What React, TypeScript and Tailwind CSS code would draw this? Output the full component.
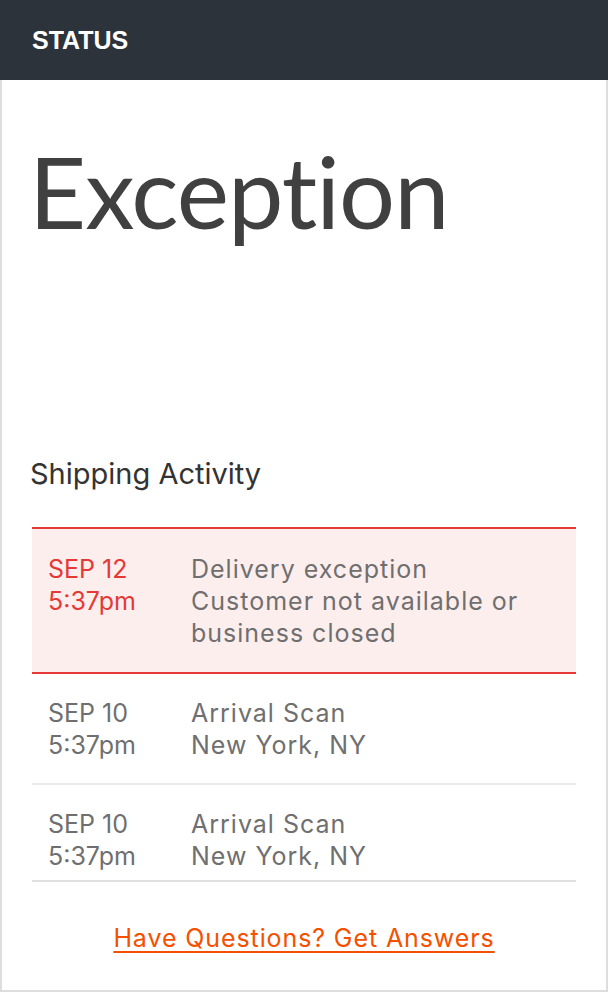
import React from "react";

const rows = [
  { date: "SEP 12", time: "5:37pm", lines: ["Delivery exception", "Customer not available or", "business closed"], alert: true },
  { date: "SEP 10", time: "5:37pm", lines: ["Arrival Scan", "New York, NY"], alert: false },
  { date: "SEP 10", time: "5:37pm", lines: ["Arrival Scan", "New York, NY"], alert: false, last: true },
];

export default function App() {
  return (
    <div className="w-[608px] h-[992px] bg-white flex flex-col" style={{ fontFamily: "Inter, 'Open Sans', sans-serif" }}>
      <div className="h-[80px] bg-[#2c333b] flex items-center px-[32px] shrink-0">
        <span className="text-white font-bold text-[25px] leading-none" style={{ fontFamily: "'Liberation Sans', Arial, sans-serif" }}>STATUS</span>
      </div>
      <div className="flex-1 border-x-2 border-b-2 border-[#dddddd] flex flex-col px-[30px]">
        <h1 className="mt-[46px] -ml-[3px] text-[99px] leading-[130px] text-[#404040] font-normal tracking-[-1px]" style={{ fontFamily: "Lato, sans-serif" }}>Exception</h1>
        <h2 className="mt-[200px] -ml-[2px] text-[29px] leading-[36px] text-[#333333]">Shipping Activity</h2>
        <div className="mt-[35px] flex flex-col">
          {rows.map((r, i) => (
            <div
              key={i}
              className={
                r.alert
                  ? "flex border-y-2 border-[#e53935] bg-[#fdeeee] pt-[24px] pb-[23px] text-[25px] leading-[32px]"
                  : r.last
                  ? "flex border-b-2 border-[#e0e0e0] pt-[23px] pb-[8px] text-[25px] leading-[32px]"
                  : "flex border-b-2 border-[#ebebeb] pt-[23px] pb-[22px] text-[25px] leading-[32px]"
              }
            >
              <div className={"w-[159px] pl-[16px] shrink-0 " + (r.alert ? "text-[#e53935]" : "text-[#6f6f6f]")}>
                <div>{r.date}</div>
                <div>{r.time}</div>
              </div>
              <div className="text-[#6f6f6f] tracking-[1px]">
                {r.lines.map((l, j) => (
                  <div key={j}>{l}</div>
                ))}
              </div>
            </div>
          ))}
        </div>
        <div className="mt-[40px] flex justify-center">
          <a href="#" className="text-[#f55000] underline text-[25px] leading-[32px] tracking-[0.9px] decoration-2 underline-offset-4">
            Have Questions? Get Answers
          </a>
        </div>
      </div>
    </div>
  );
}
